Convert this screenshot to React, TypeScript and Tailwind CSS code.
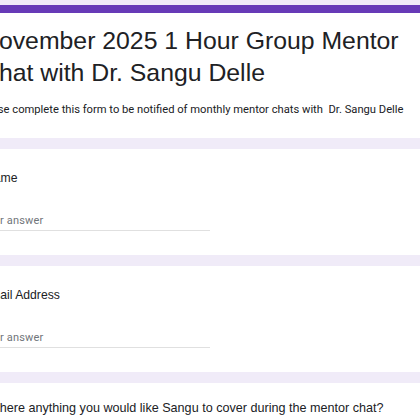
const sans = { fontFamily: '"Liberation Sans", Arial, sans-serif' }
const roboto = { fontFamily: 'Roboto, "Liberation Sans", sans-serif' }

function AnswerField() {
  return (
    <div className="mt-[26px] w-[210px] border-b border-[#e0e0e0] pb-[1px]">
      <div
        className="-ml-[19px] text-[11px] leading-[16px] tracking-[0.15px] text-[#70757a]"
        style={roboto}
      >
        Your answer
      </div>
    </div>
  )
}

function QuestionCard({
  label,
  labelClass,
  top = 'pt-[20px]',
  children,
}: {
  label: string
  labelClass: string
  top?: string
  children?: React.ReactNode
}) {
  return (
    <section className={`bg-white pb-[24px] overflow-hidden ${top}`}>
      <div className={`${labelClass} whitespace-nowrap leading-[18px] text-[#202124]`} style={sans}>
        {label}
      </div>
      {children}
    </section>
  )
}

export default function App() {
  return (
    <div className="h-[420px] w-[420px] overflow-hidden bg-[#f0ebf8] pt-[5px]">
      <div className="flex flex-col gap-[11px]">
        <section className="bg-white">
          <div className="h-[8px] bg-[#673ab7]" />
          <div className="pb-[19px] pt-[12px] overflow-hidden">
            <h1
              className="-ml-[19px] w-[460px] text-[24.8px] leading-[32px] text-[#202124]"
              style={sans}
            >
              November 2025 1 Hour Group Mentor Chat with Dr. Sangu Delle
            </h1>
            <p
              className="-ml-[24px] mt-[13px] whitespace-pre text-[11.2px] text-[#202124]"
              style={roboto}
            >
              Please complete this form to be notified of monthly mentor chats with  Dr. Sangu Delle
            </p>
          </div>
        </section>

        <QuestionCard label="Name" labelClass="-ml-[15px] text-[12.2px]">
          <AnswerField />
        </QuestionCard>

        <QuestionCard label="Email Address" labelClass="-ml-[18px] text-[12.2px]">
          <AnswerField />
        </QuestionCard>

        <QuestionCard
          label="Is there anything you would like Sangu to cover during the mentor chat?"
          labelClass="-ml-[17px] text-[12.6px]"
          top="pt-[16px]"
        />
      </div>
    </div>
  )
}
